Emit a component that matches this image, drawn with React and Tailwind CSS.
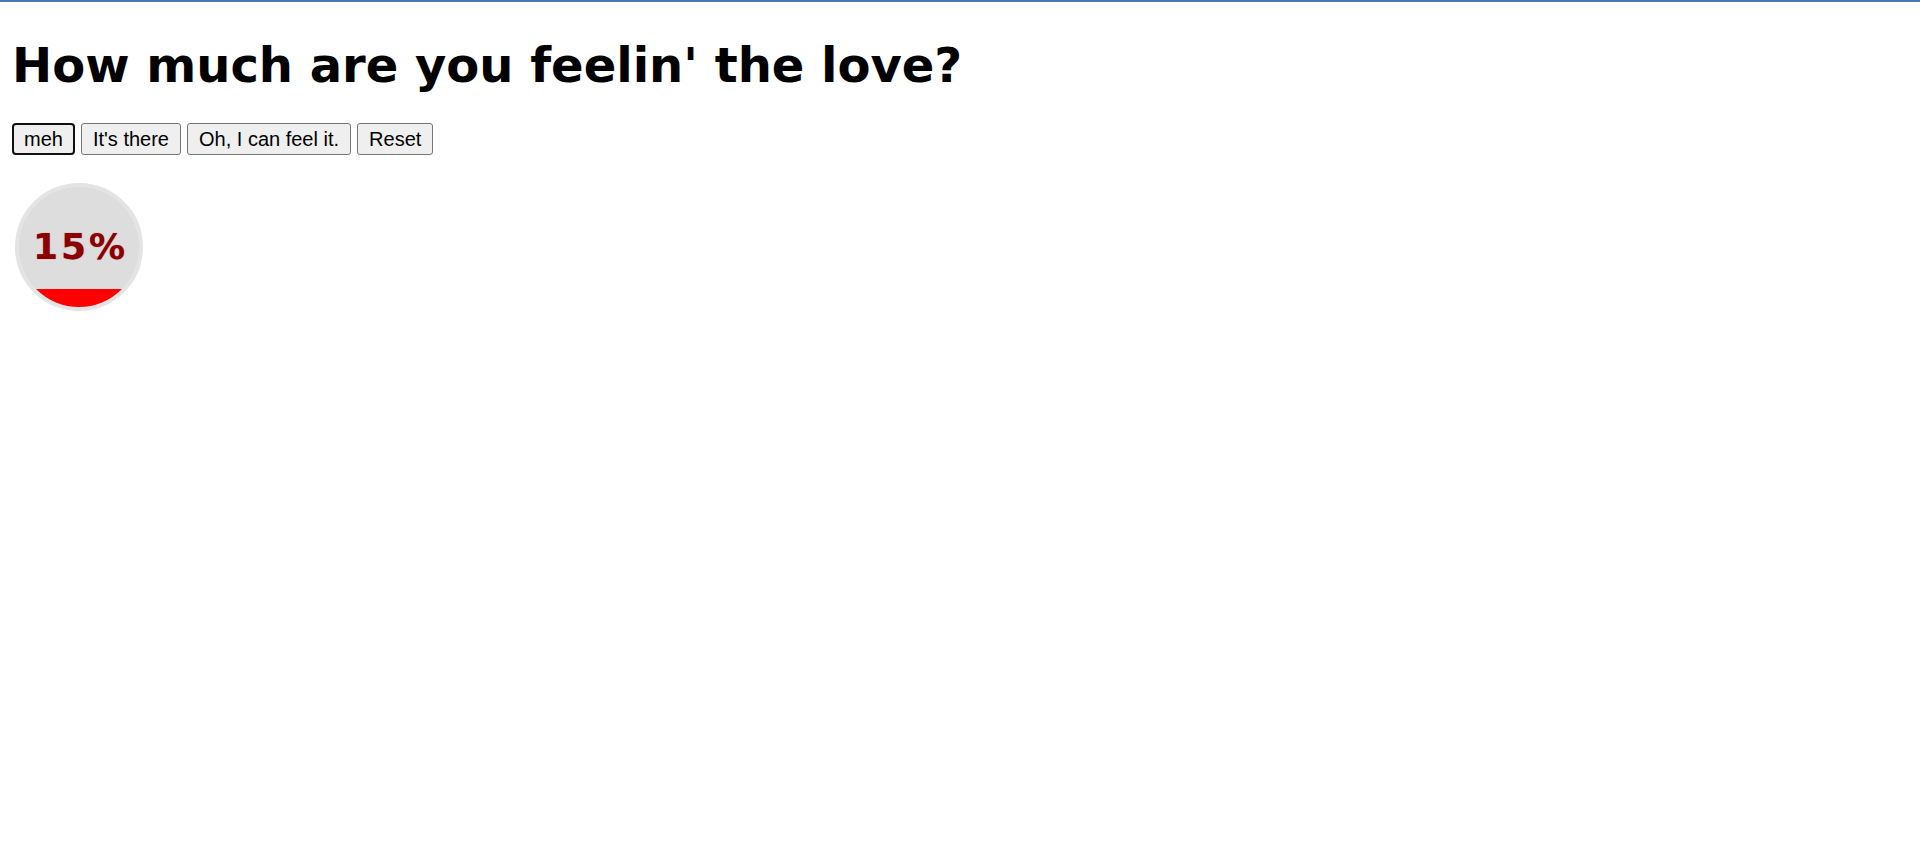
import React, { useState } from 'react';

const LEVELS = [
  { label: 'meh', value: 15 },
  { label: "It's there", value: 50 },
  { label: 'Oh, I can feel it.', value: 90 },
];

const LoveMeter = ({ percent }) => (
  <div className="relative w-[128px] h-[128px] ml-[3px] rounded-full border-4 border-[#e4e4e4] bg-[#dddddd] overflow-hidden flex items-center justify-center">
    {/* fill level */}
    <div
      className="absolute left-0 right-0 bottom-0 bg-[#ff0000]"
      style={{ height: `${percent}%` }}
    />
    <span className="relative pl-[3px] font-['DejaVu_Sans',Verdana,sans-serif] font-bold text-[36px] tracking-[3px] leading-none text-[#8b0000] [text-shadow:0_0_1px_rgba(139,0,0,0.6)]">
      {percent}%
    </span>
  </div>
);

const App = () => {
  const [percent, setPercent] = useState(15);
  const [active, setActive] = useState('meh');

  const pick = (label, value) => {
    setActive(label);
    setPercent(value);
  };

  return (
    <div className="min-h-screen bg-white border-t-2 border-[#4a78b0]">
      <div className="px-[12px]">
        <h1 className="pt-[35px] font-['DejaVu_Sans',Verdana,sans-serif] font-bold text-[48px] leading-[56px] text-black">
          How much are you feelin' the love?
        </h1>

        {/* Buttons */}
        <div className="flex gap-[6px] mt-[30px] font-['Liberation_Sans',Arial,sans-serif] text-[20px] text-black">
          {LEVELS.map((level) => (
            <button
              key={level.label}
              onClick={() => pick(level.label, level.value)}
              className={
                active === level.label
                  ? 'h-[32px] px-[10px] bg-[#efefef] border-2 border-[#101010] rounded-[4px] leading-none'
                  : 'h-[32px] px-[11px] bg-[#efefef] border border-[#767676] rounded-[3px] leading-none'
              }
            >
              {level.label}
            </button>
          ))}
          <button
            onClick={() => pick('', 0)}
            className="h-[32px] px-[11px] bg-[#efefef] border border-[#767676] rounded-[3px] leading-none"
          >
            Reset
          </button>
        </div>

        <div className="mt-[28px]">
          <LoveMeter percent={percent} />
        </div>
      </div>
    </div>
  );
};

export default App;
